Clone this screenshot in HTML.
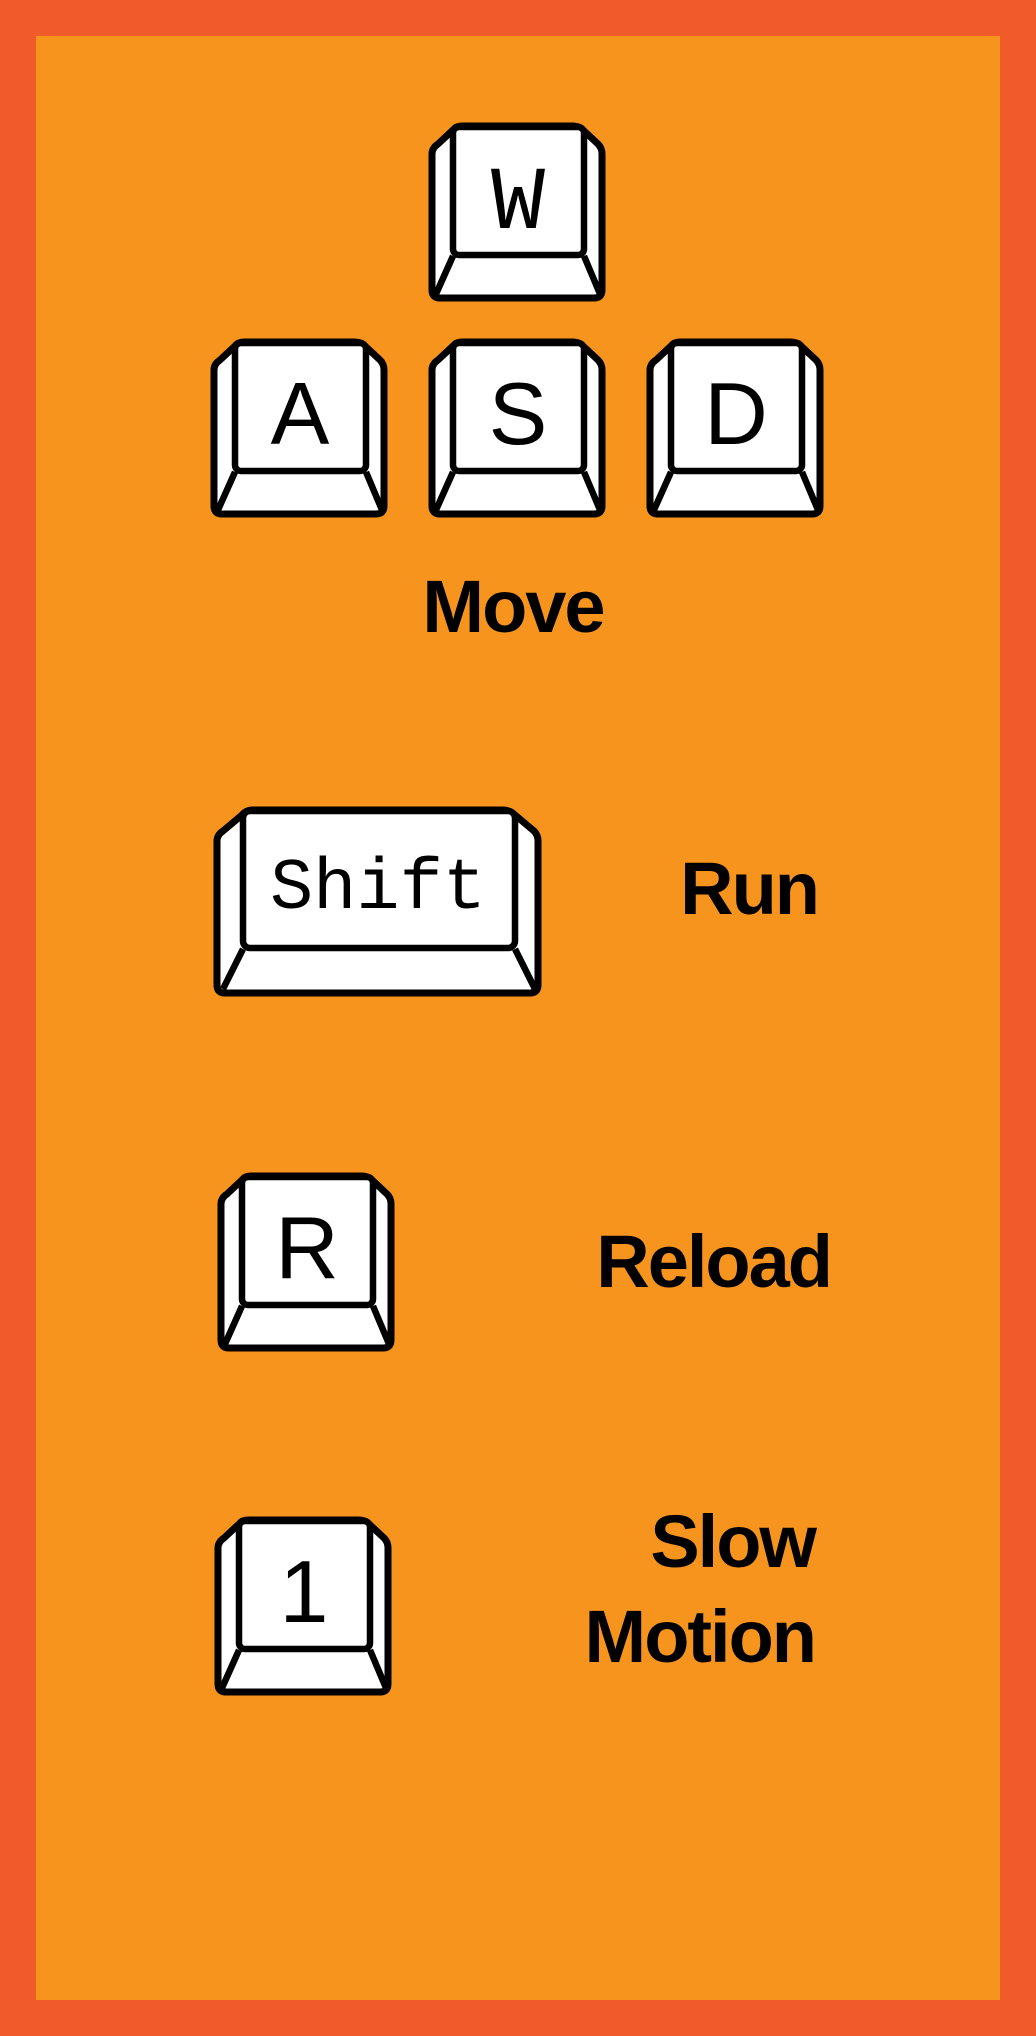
<!DOCTYPE html>
<html><head><meta charset="utf-8"><style>
html,body{margin:0;padding:0}
body{width:1036px;height:2036px;background:#f15a29;position:relative;overflow:hidden}
.in{position:absolute;left:36px;top:36px;width:964px;height:1964px;background:#f7941e}
svg{position:absolute;overflow:visible}
.lbl{position:absolute;font-family:"Liberation Sans",sans-serif;font-weight:bold;font-size:74px;line-height:74px;letter-spacing:-2px;color:#000;white-space:nowrap}
</style></head><body>
<div class="in"></div>
<svg width="0" height="0" style="position:absolute">
<defs>
<g id="key">
<path d="M10 22 L25 8 Q28 4 34 4 L145 4 Q151 4 155 8 L170 22 Q174 26 174 32 L174 168 Q174 176 166 176 L12 176 Q4 176 4 168 L4 32 Q4 26 10 22 Z" fill="#fff" stroke="#000" stroke-width="7" stroke-linejoin="round"/>
<rect x="25" y="5" width="131" height="128" rx="6" fill="#fff" stroke="#000" stroke-width="6.5"/>
<path d="M25 134 L8 172 M156 134 L172 172" stroke="#000" stroke-width="6.5" fill="none"/>
</g>
</defs>
</svg>

<svg style="left:428px;top:122px" width="178" height="181"><use href="#key"/><text x="90" y="106" text-anchor="middle" font-family="Liberation Mono, monospace" font-size="90">W</text></svg>
<svg style="left:210px;top:338px" width="178" height="181"><use href="#key"/><text x="90" y="106" text-anchor="middle" font-family="Liberation Sans, sans-serif" font-size="88">A</text></svg>
<svg style="left:428px;top:338px" width="178" height="181"><use href="#key"/><text x="90" y="106" text-anchor="middle" font-family="Liberation Sans, sans-serif" font-size="88">S</text></svg>
<svg style="left:646px;top:338px" width="178" height="181"><use href="#key"/><text x="90" y="106" text-anchor="middle" font-family="Liberation Sans, sans-serif" font-size="88">D</text></svg>

<svg style="left:213px;top:805px" width="329" height="192">
<path d="M10 26 L29 10 Q33 5 40 5 L290 5 Q297 5 302 10 L321 26 Q325 30 325 36 L325 180 Q325 188 317 188 L12 188 Q4 188 4 180 L4 36 Q4 30 10 26 Z" fill="#fff" stroke="#000" stroke-width="7" stroke-linejoin="round"/>
<rect x="30" y="6" width="272" height="137" rx="7" fill="#fff" stroke="#000" stroke-width="6.5"/>
<path d="M30 144 L10 184 M302 144 L322 184" stroke="#000" stroke-width="6.5" fill="none"/>
<text x="165" y="103" text-anchor="middle" font-family="Liberation Mono, monospace" font-size="72">Shift</text>
</svg>

<svg style="left:217px;top:1172px" width="178" height="181"><use href="#key"/><text x="90" y="106" text-anchor="middle" font-family="Liberation Sans, sans-serif" font-size="88">R</text></svg>
<svg style="left:214px;top:1516px" width="178" height="181"><use href="#key"/><text x="90" y="106" text-anchor="middle" font-family="Liberation Sans, sans-serif" font-size="88">1</text></svg>

<div class="lbl" style="left:313px;width:400px;text-align:center;top:570px">Move</div>
<div class="lbl" style="right:218px;top:852px">Run</div>
<div class="lbl" style="right:205px;top:1225px">Reload</div>
<div class="lbl" style="right:221px;top:1505px">Slow</div>
<div class="lbl" style="right:221px;top:1600px">Motion</div>
</body></html>
